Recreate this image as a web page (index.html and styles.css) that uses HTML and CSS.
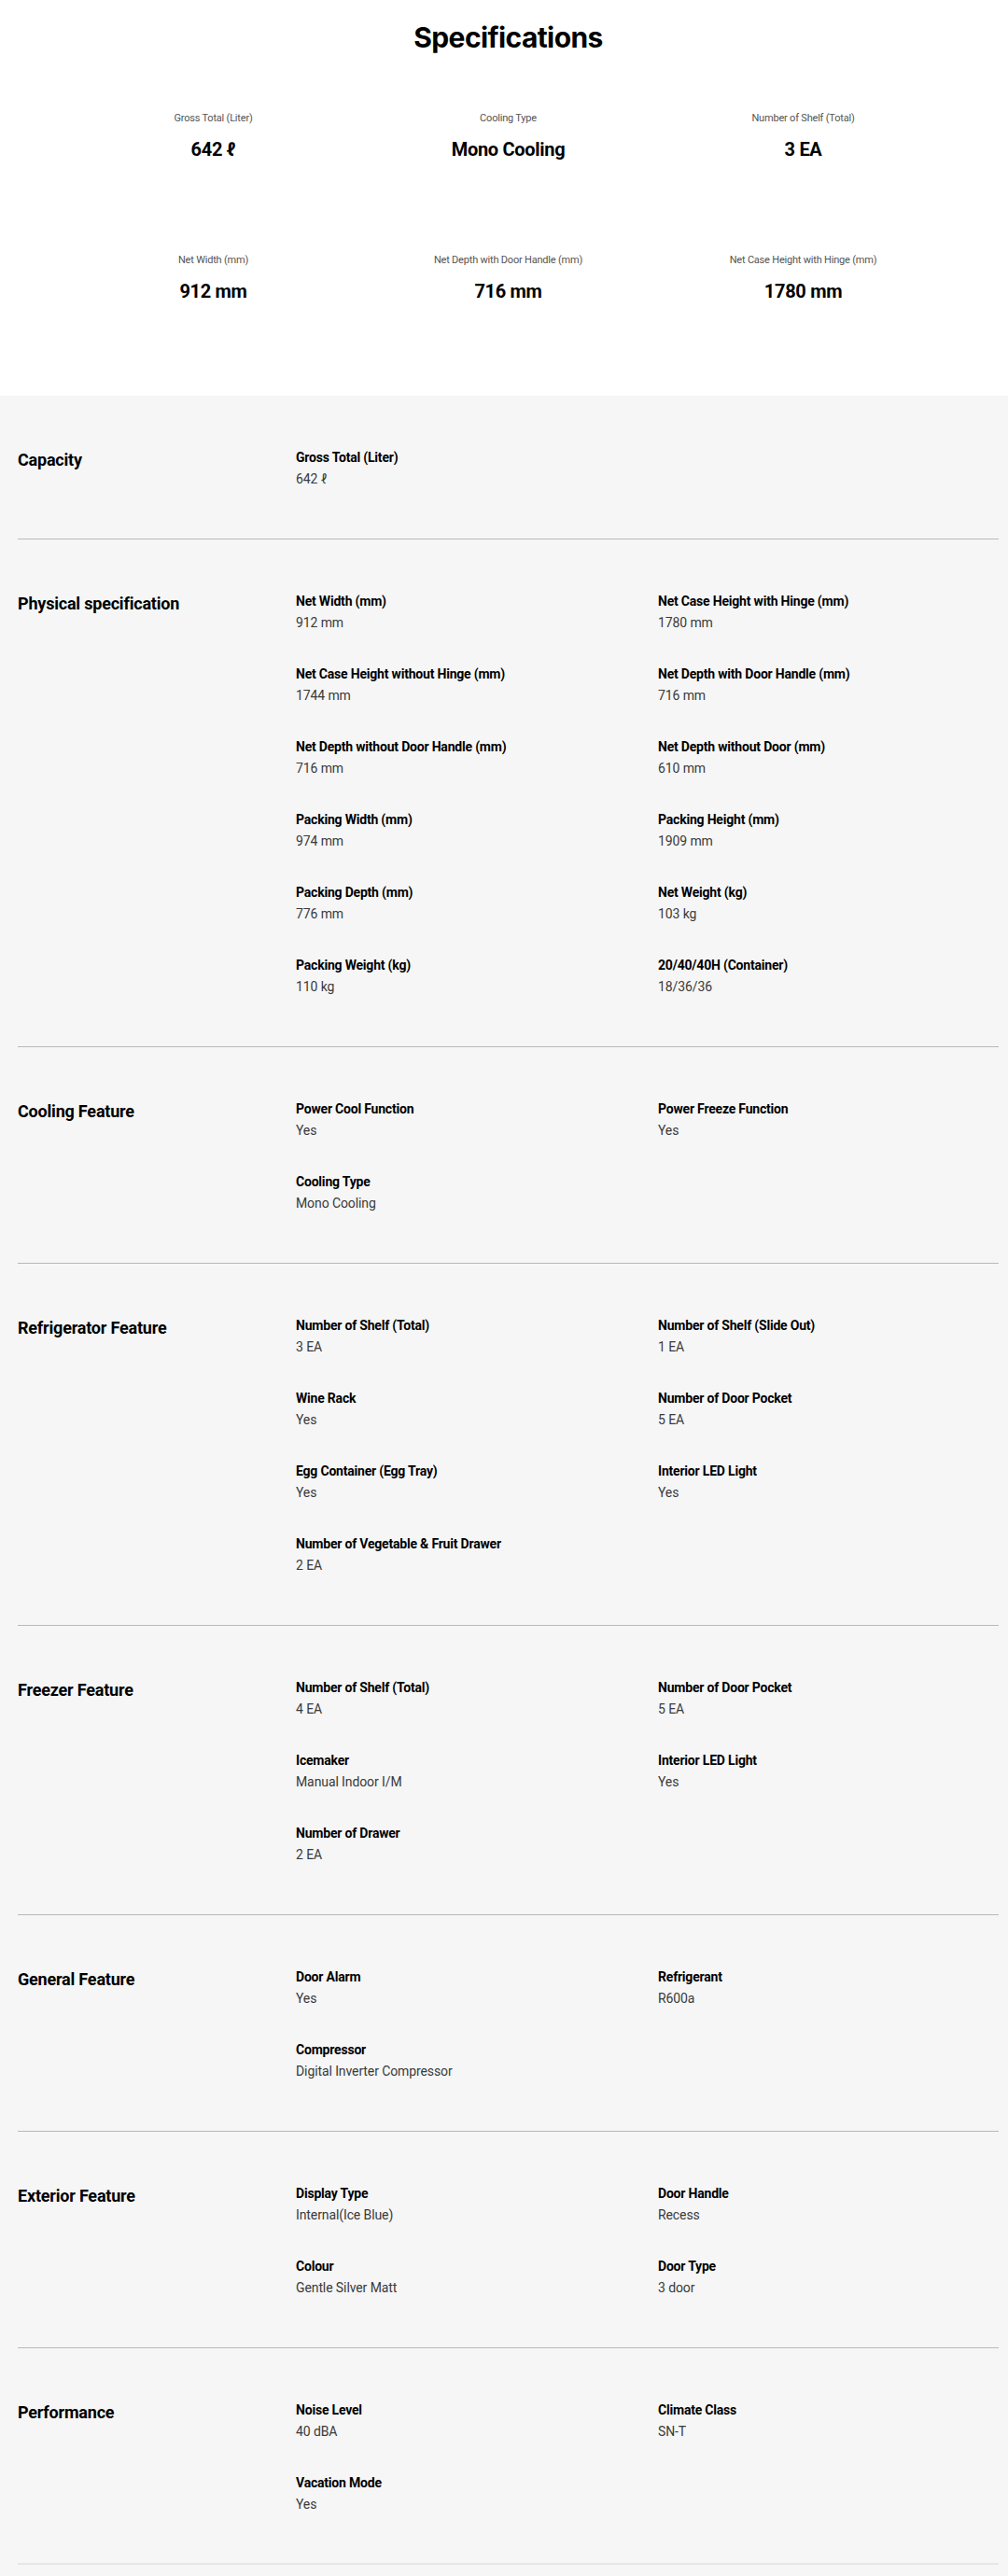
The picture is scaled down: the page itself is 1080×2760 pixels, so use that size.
FILE: index.html
```html
<!DOCTYPE html>
<html lang="en">
<head>
<meta charset="utf-8">
<title>Specifications</title>
<link rel="stylesheet" href="styles.css">
</head>
<body>
<section class="summary">
  <h1 class="summary-title">Specifications</h1>
  <div class="summary-grid">
    <div class="summary-item"><div class="summary-label">Gross Total (Liter)</div><div class="summary-value">642 ℓ</div></div>
    <div class="summary-item"><div class="summary-label">Cooling Type</div><div class="summary-value">Mono Cooling</div></div>
    <div class="summary-item"><div class="summary-label">Number of Shelf (Total)</div><div class="summary-value">3 EA</div></div>
    <div class="summary-item"><div class="summary-label">Net Width (mm)</div><div class="summary-value">912 mm</div></div>
    <div class="summary-item"><div class="summary-label">Net Depth with Door Handle (mm)</div><div class="summary-value">716 mm</div></div>
    <div class="summary-item"><div class="summary-label">Net Case Height with Hinge (mm)</div><div class="summary-value">1780 mm</div></div>
  </div>
</section>

<div class="details">
  <section class="spec">
    <h2 class="spec-title">Capacity</h2>
    <div class="spec-list">
      <div class="spec-item"><div class="spec-label">Gross Total (Liter)</div><div class="spec-value">642 ℓ</div></div>
    </div>
  </section>

  <section class="spec">
    <h2 class="spec-title">Physical specification</h2>
    <div class="spec-list">
      <div class="spec-item"><div class="spec-label">Net Width (mm)</div><div class="spec-value">912 mm</div></div>
      <div class="spec-item"><div class="spec-label">Net Case Height with Hinge (mm)</div><div class="spec-value">1780 mm</div></div>
      <div class="spec-item"><div class="spec-label">Net Case Height without Hinge (mm)</div><div class="spec-value">1744 mm</div></div>
      <div class="spec-item"><div class="spec-label">Net Depth with Door Handle (mm)</div><div class="spec-value">716 mm</div></div>
      <div class="spec-item"><div class="spec-label">Net Depth without Door Handle (mm)</div><div class="spec-value">716 mm</div></div>
      <div class="spec-item"><div class="spec-label">Net Depth without Door (mm)</div><div class="spec-value">610 mm</div></div>
      <div class="spec-item"><div class="spec-label">Packing Width (mm)</div><div class="spec-value">974 mm</div></div>
      <div class="spec-item"><div class="spec-label">Packing Height (mm)</div><div class="spec-value">1909 mm</div></div>
      <div class="spec-item"><div class="spec-label">Packing Depth (mm)</div><div class="spec-value">776 mm</div></div>
      <div class="spec-item"><div class="spec-label">Net Weight (kg)</div><div class="spec-value">103 kg</div></div>
      <div class="spec-item"><div class="spec-label">Packing Weight (kg)</div><div class="spec-value">110 kg</div></div>
      <div class="spec-item"><div class="spec-label">20/40/40H (Container)</div><div class="spec-value">18/36/36</div></div>
    </div>
  </section>

  <section class="spec">
    <h2 class="spec-title">Cooling Feature</h2>
    <div class="spec-list">
      <div class="spec-item"><div class="spec-label">Power Cool Function</div><div class="spec-value">Yes</div></div>
      <div class="spec-item"><div class="spec-label">Power Freeze Function</div><div class="spec-value">Yes</div></div>
      <div class="spec-item"><div class="spec-label">Cooling Type</div><div class="spec-value">Mono Cooling</div></div>
    </div>
  </section>

  <section class="spec">
    <h2 class="spec-title">Refrigerator Feature</h2>
    <div class="spec-list">
      <div class="spec-item"><div class="spec-label">Number of Shelf (Total)</div><div class="spec-value">3 EA</div></div>
      <div class="spec-item"><div class="spec-label">Number of Shelf (Slide Out)</div><div class="spec-value">1 EA</div></div>
      <div class="spec-item"><div class="spec-label">Wine Rack</div><div class="spec-value">Yes</div></div>
      <div class="spec-item"><div class="spec-label">Number of Door Pocket</div><div class="spec-value">5 EA</div></div>
      <div class="spec-item"><div class="spec-label">Egg Container (Egg Tray)</div><div class="spec-value">Yes</div></div>
      <div class="spec-item"><div class="spec-label">Interior LED Light</div><div class="spec-value">Yes</div></div>
      <div class="spec-item"><div class="spec-label">Number of Vegetable &amp; Fruit Drawer</div><div class="spec-value">2 EA</div></div>
    </div>
  </section>

  <section class="spec">
    <h2 class="spec-title">Freezer Feature</h2>
    <div class="spec-list">
      <div class="spec-item"><div class="spec-label">Number of Shelf (Total)</div><div class="spec-value">4 EA</div></div>
      <div class="spec-item"><div class="spec-label">Number of Door Pocket</div><div class="spec-value">5 EA</div></div>
      <div class="spec-item"><div class="spec-label">Icemaker</div><div class="spec-value">Manual Indoor I/M</div></div>
      <div class="spec-item"><div class="spec-label">Interior LED Light</div><div class="spec-value">Yes</div></div>
      <div class="spec-item"><div class="spec-label">Number of Drawer</div><div class="spec-value">2 EA</div></div>
    </div>
  </section>

  <section class="spec">
    <h2 class="spec-title">General Feature</h2>
    <div class="spec-list">
      <div class="spec-item"><div class="spec-label">Door Alarm</div><div class="spec-value">Yes</div></div>
      <div class="spec-item"><div class="spec-label">Refrigerant</div><div class="spec-value">R600a</div></div>
      <div class="spec-item"><div class="spec-label">Compressor</div><div class="spec-value">Digital Inverter Compressor</div></div>
    </div>
  </section>

  <section class="spec">
    <h2 class="spec-title">Exterior Feature</h2>
    <div class="spec-list">
      <div class="spec-item"><div class="spec-label">Display Type</div><div class="spec-value">Internal(Ice Blue)</div></div>
      <div class="spec-item"><div class="spec-label">Door Handle</div><div class="spec-value">Recess</div></div>
      <div class="spec-item"><div class="spec-label">Colour</div><div class="spec-value">Gentle Silver Matt</div></div>
      <div class="spec-item"><div class="spec-label">Door Type</div><div class="spec-value">3 door</div></div>
    </div>
  </section>

  <section class="spec spec-last">
    <h2 class="spec-title">Performance</h2>
    <div class="spec-list">
      <div class="spec-item"><div class="spec-label">Noise Level</div><div class="spec-value">40 dBA</div></div>
      <div class="spec-item"><div class="spec-label">Climate Class</div><div class="spec-value">SN-T</div></div>
      <div class="spec-item"><div class="spec-label">Vacation Mode</div><div class="spec-value">Yes</div></div>
    </div>
  </section>
</div>
</body>
</html>
```
FILE: styles.css
```css
html, body {
  margin: 0;
  padding: 0;
  background: #f6f6f6;
}

body {
  font-family: Roboto, "Liberation Sans", sans-serif;
  color: #000;
}

.summary {
  background: #fff;
  height: 424px;
  box-sizing: border-box;
  padding: 22px 10px 0 19px;
}

.summary-title {
  margin: 0;
  text-align: center;
  font-family: Inter, "Open Sans", sans-serif;
  font-weight: 700;
  font-size: 30px;
  line-height: 36px;
  letter-spacing: -0.6px;
  color: #000;
}

.summary-grid {
  width: 948px;
  margin: 61px auto 0;
  display: grid;
  grid-template-columns: repeat(3, 1fr);
  row-gap: 98px;
}

.summary-item {
  display: flex;
  flex-direction: column;
  align-items: center;
  gap: 12px;
}

.summary-label {
  font-size: 11px;
  line-height: 16px;
  color: #555;
  letter-spacing: -0.2px;
}

.summary-value {
  font-family: Roboto, "Liberation Sans", sans-serif;
  font-weight: 700;
  font-size: 20px;
  line-height: 26px;
  letter-spacing: -0.3px;
  color: #000;
}

.details {
  padding: 0 10px 0 19px;
}

.spec {
  display: grid;
  grid-template-columns: 298px 1fr;
  padding: 55px 0 52px;
  border-bottom: 1px solid #b9b9b9;
}

.spec-last {
  border-bottom: 2px solid #e6e6e6;
  padding-bottom: 51px;
}

.spec-title {
  margin: 0;
  font-family: Roboto, "Liberation Sans", sans-serif;
  font-weight: 700;
  font-size: 18px;
  line-height: 28px;
  letter-spacing: -0.2px;
  color: #000;
}

.spec-list {
  display: grid;
  grid-template-columns: 388px 1fr;
  row-gap: 32px;
}

.spec-label {
  font-weight: 700;
  font-size: 14px;
  line-height: 22px;
  letter-spacing: -0.2px;
  color: #000;
}

.spec-value {
  font-size: 14px;
  line-height: 24px;
  letter-spacing: -0.1px;
  color: #3a3a3a;
}
```
